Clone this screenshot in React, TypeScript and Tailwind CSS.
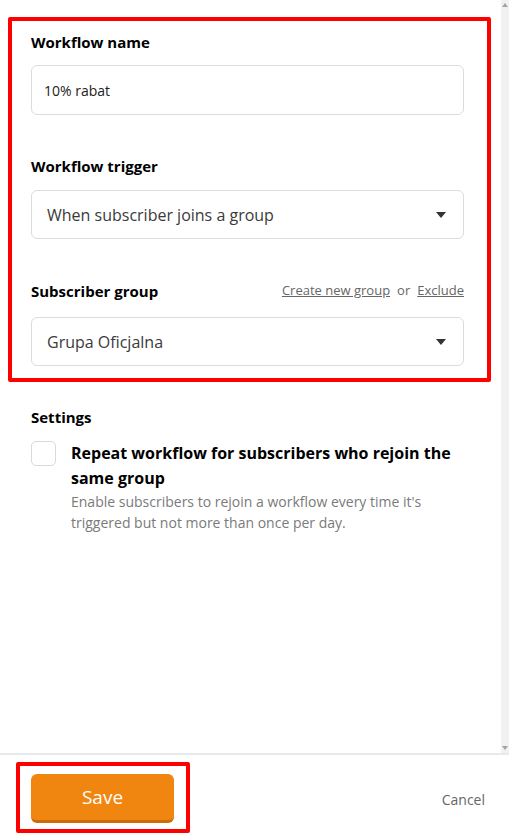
import React from "react";

const font = { fontFamily: "'Open Sans', Arial, sans-serif" };

function Caret() {
  return (
    <svg width="10" height="6" viewBox="0 0 10 6" className="shrink-0">
      <path d="M0 0 L10 0 L5 6 Z" fill="#333333" />
    </svg>
  );
}

function SelectBox({ value, className }: { value: string; className?: string }) {
  return (
    <div
      className={`flex h-[49px] w-[433px] items-center justify-between rounded-md border border-[#dcdcdc] bg-white pl-[15px] pr-[17px] ${className ?? ""}`}
    >
      <span className="text-[16px] text-[#3a3a3a]">{value}</span>
      <Caret />
    </div>
  );
}

export default function App() {
  return (
    <div className="flex h-[834px] w-[509px] flex-col bg-white text-black" style={font}>
      {/* scroll area */}
      <div className="flex h-[753px] shrink-0">
        <div className="w-[501px]">
          {/* highlighted block */}
          <div className="ml-[8px] mt-[17px] w-[483px] rounded-[2px] border-4 border-[#ff0000] pb-[12px] pl-[19px] pt-[11px]">
            <div className="text-[15px] font-bold leading-[20px]">Workflow name</div>
            <div className="mt-[13px] flex h-[50px] w-[433px] items-center rounded-md border border-[#dcdcdc] pl-[12px] text-[14px] text-[#222]">
              10% rabat
            </div>

            <div className="mt-[41px] text-[15px] font-bold leading-[20px]">Workflow trigger</div>
            <SelectBox value="When subscriber joins a group" className="mt-[14px]" />

            <div className="mt-[42px] flex w-[433px] items-center justify-between">
              <span className="text-[15px] font-bold leading-[20px]">Subscriber group</span>
              <span className="text-[13px] text-[#666]">
                <span className="underline">Create new group</span>
                <span className="mx-[7px]">or</span>
                <span className="underline">Exclude</span>
              </span>
            </div>
            <SelectBox value="Grupa Oficjalna" className="mt-[16px]" />
          </div>

          {/* settings */}
          <div className="pl-[31px] pt-[25px]">
            <div className="text-[15px] font-bold leading-[20px]">Settings</div>
            <div className="mt-[14px] flex gap-[15px]">
              <div className="h-[25px] w-[25px] shrink-0 rounded-[5px] border border-[#d9d9d9] bg-white" />
              <div className="w-[400px]">
                <div className="text-[16px] font-bold leading-[25px]">
                  Repeat workflow for subscribers who rejoin the same group
                </div>
                <div className="text-[14px] leading-[21px] text-[#7a7a7a]">
                  Enable subscribers to rejoin a workflow every time it's triggered but not more than once per day.
                </div>
              </div>
            </div>
          </div>
        </div>

        {/* scrollbar */}
        <div className="flex w-[8px] flex-col items-center justify-between bg-[#f1f1f1] py-[3px]">
          <svg width="6" height="4" viewBox="0 0 6 4">
            <path d="M0 4 L6 4 L3 0 Z" fill="#a3a3a3" />
          </svg>
          <svg width="6" height="4" viewBox="0 0 6 4">
            <path d="M0 0 L6 0 L3 4 Z" fill="#a3a3a3" />
          </svg>
        </div>
      </div>

      {/* footer */}
      <div className="flex flex-1 items-start justify-between border-t-2 border-[#e6eaef] pl-[16px] pr-[24px] pt-[7px]">
        <div className="rounded-[2px] border-4 border-[#ff0000] pb-[6px] pl-[11px] pr-[12px] pt-[8px]">
          <button className="flex h-[49px] w-[143px] items-center justify-center rounded-md border-b-[3px] border-[#c86d08] bg-[#f0860f] text-[19px] text-white">
            Save
          </button>
        </div>
        <span className="mt-[27px] text-[14px] text-[#666]">Cancel</span>
      </div>
    </div>
  );
}
